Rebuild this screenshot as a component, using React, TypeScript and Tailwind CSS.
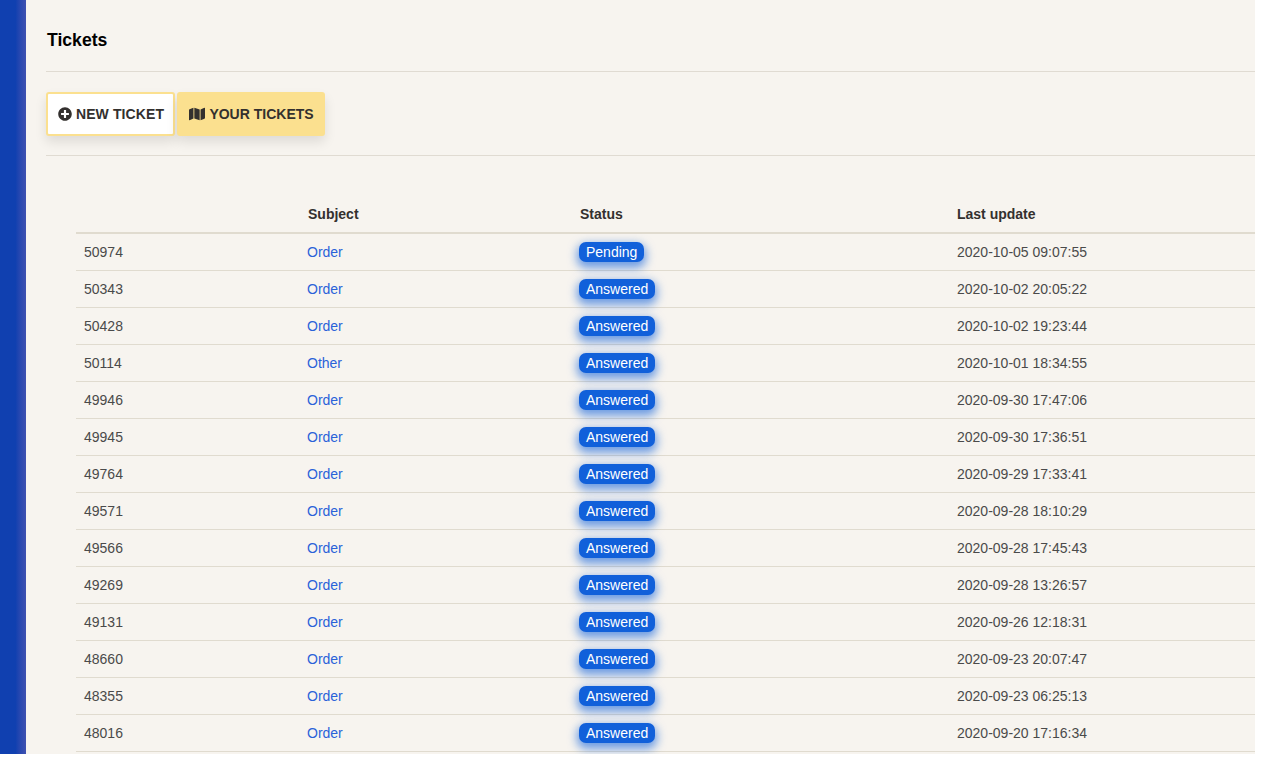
import { FaMap, FaPlusCircle } from "react-icons/fa";

const tickets = [
    { id: "50974", subject: "Order", status: "Pending", updated: "2020-10-05 09:07:55" },
    { id: "50343", subject: "Order", status: "Answered", updated: "2020-10-02 20:05:22" },
    { id: "50428", subject: "Order", status: "Answered", updated: "2020-10-02 19:23:44" },
    { id: "50114", subject: "Other", status: "Answered", updated: "2020-10-01 18:34:55" },
    { id: "49946", subject: "Order", status: "Answered", updated: "2020-09-30 17:47:06" },
    { id: "49945", subject: "Order", status: "Answered", updated: "2020-09-30 17:36:51" },
    { id: "49764", subject: "Order", status: "Answered", updated: "2020-09-29 17:33:41" },
    { id: "49571", subject: "Order", status: "Answered", updated: "2020-09-28 18:10:29" },
    { id: "49566", subject: "Order", status: "Answered", updated: "2020-09-28 17:45:43" },
    { id: "49269", subject: "Order", status: "Answered", updated: "2020-09-28 13:26:57" },
    { id: "49131", subject: "Order", status: "Answered", updated: "2020-09-26 12:18:31" },
    { id: "48660", subject: "Order", status: "Answered", updated: "2020-09-23 20:07:47" },
    { id: "48355", subject: "Order", status: "Answered", updated: "2020-09-23 06:25:13" },
    { id: "48016", subject: "Order", status: "Answered", updated: "2020-09-20 17:16:34" },
]

function TicketRow({ ticket }: { ticket: typeof tickets[number] }) {
    return (
        <div className="flex h-[37px] shrink-0 items-center border-b border-[#e0dbcf] text-[14px] text-[#4a4a4a]">
            <div className="w-[224px] pl-2">{ticket.id}</div>
            <div className="w-[271px] pl-[7px]"><a className="text-[#2a62d9]">{ticket.subject}</a></div>
            <div className="w-[386px] pl-[8px]">
                <span className="inline-block h-[20px] rounded-[7px] bg-[#1160da] px-[7px] leading-[20px] text-white shadow-[0_4px_10px_2px_rgba(17,96,218,0.6)]">{ticket.status}</span>
            </div>
            <div>{ticket.updated}</div>
        </div>
    )
}

export default function App() {
    return (
        <div className="flex h-[754px] w-[1255px] overflow-hidden font-['Liberation_Sans',Arial,sans-serif]">
            <div className="w-[26px] shrink-0 bg-gradient-to-r from-[#1040b0] from-60% to-[#3f51b0]" />
            <main className="flex min-w-0 flex-1 flex-col bg-[#f7f4ef] pl-5">
                <h1 className="h-[71px] pl-[1px] pt-[30px] text-[17.6px] font-bold leading-[20px] text-black">Tickets</h1>
                <div className="h-[1px] bg-[#e0dbd2]" />
                <div className="flex gap-[2px] pt-5 pb-[19px]">
                    <button className="flex h-[44px] w-[129px] items-center justify-center gap-1 rounded-[3px] border-2 border-[#fbe08f] bg-white pl-[1px] text-[14px] font-bold tracking-[0.1px] text-[#33302e] shadow-[0_6px_12px_rgba(0,0,0,0.1)]">
                        <FaPlusCircle size={14} />NEW TICKET
                    </button>
                    <button className="flex h-[44px] w-[148px] items-center justify-center gap-1 rounded-[3px] bg-[#fbe08f] pl-[1px] text-[14px] font-bold text-[#33302e] shadow-[0_6px_12px_rgba(0,0,0,0.1)]">
                        <FaMap size={16} />YOUR TICKETS
                    </button>
                </div>
                <div className="h-[1px] bg-[#e0dbd2]" />
                <div className="flex flex-col pl-[30px] pt-[43px]">
                    <div className="flex h-[35px] shrink-0 items-center border-b-2 border-[#e0dbcf] pb-[3px] text-[14px] font-bold text-[#33302e]">
                        <div className="w-[224px]" />
                        <div className="w-[272px] pl-[8px]">Subject</div>
                        <div className="w-[385px] pl-[8px]">Status</div>
                        <div>Last update</div>
                    </div>
                    {tickets.map((ticket) => (
                        <TicketRow key={ticket.id} ticket={ticket} />
                    ))}
                </div>
            </main>
        </div>
    )
}
